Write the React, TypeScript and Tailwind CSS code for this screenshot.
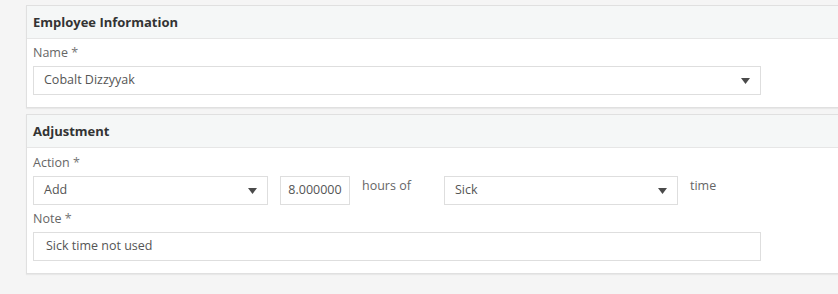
import React from "react";

function Caret() {
  return (
    <svg width="9" height="6" viewBox="0 0 9 6" className="shrink-0">
      <path d="M0 0 L9 0 L4.5 6 Z" fill="#4a4a4a" />
    </svg>
  );
}

function Select({ value, className }: { value: string; className: string }) {
  return (
    <div
      className={`h-[29px] border border-[#dedede] bg-white flex items-center justify-between pl-[10px] pr-[10px] text-[12.5px] text-[#555] ${className}`}
    >
      <span>{value}</span>
      <Caret />
    </div>
  );
}

function Label({ text }: { text: string }) {
  return (
    <div className="text-[12.5px] leading-[18px] text-[#666] mb-[4px]">
      {text} <span className="text-[#777]">*</span>
    </div>
  );
}

function Panel({
  title,
  children,
}: {
  title: string;
  children: React.ReactNode;
}) {
  return (
    <div className="w-[830px] bg-white border border-[#e0e0e0] shadow-[0_1px_1px_rgba(0,0,0,0.05)]">
      <div className="h-[33px] bg-[#f5f7f7] border-b border-[#e6e6e6] flex items-center px-[6px] pt-[2px] text-[13px] font-bold text-[#333]">
        {title}
      </div>
      <div className="px-[6px] pt-[5px] pb-[12px]">{children}</div>
    </div>
  );
}

export default function App() {
  return (
    <div
      className="w-[838px] h-[294px] overflow-hidden bg-[#f5f5f5] pl-[26px] pt-[5px] flex flex-col gap-[6px]"
      style={{ fontFamily: '"Open Sans", sans-serif' }}
    >
      <Panel title="Employee Information">
        <Label text="Name" />
        <Select value="Cobalt Dizzyyak" className="w-[728px]" />
      </Panel>
      <Panel title="Adjustment">
        <div className="mt-[1px]">
          <Label text="Action" />
        </div>
        <div className="flex items-start text-[12.5px] text-[#666]">
          <Select value="Add" className="w-[235px]" />
          <div className="ml-[12px] w-[70px] h-[29px] border border-[#dedede] flex items-center justify-center text-[#555]">
            8.000000
          </div>
          <div className="ml-[12px] w-[82px] pt-[1px]">hours of</div>
          <Select value="Sick" className="w-[234px]" />
          <div className="ml-[12px] pt-[1px]">time</div>
        </div>
        <div className="mt-[5px]">
          <Label text="Note" />
        </div>
        <div className="w-[728px] h-[29px] border border-[#dedede] flex items-center pl-[12px] text-[12.5px] text-[#555]">
          Sick time not used
        </div>
      </Panel>
    </div>
  );
}
